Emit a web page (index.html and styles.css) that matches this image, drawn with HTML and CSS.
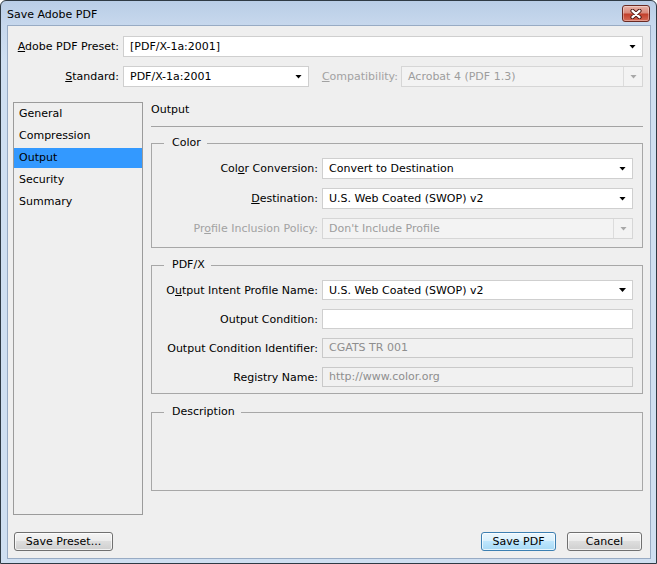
FILE: index.html
```html
<!DOCTYPE html>
<html lang="en">
<head>
<meta charset="utf-8">
<title>Save Adobe PDF</title>
<link rel="stylesheet" href="styles.css">
</head>
<body>
<div class="window">
  <div class="titlebar">
    <span class="title">Save Adobe PDF</span>
    <button class="close" aria-label="Close">
      <svg width="14" height="10" viewBox="0 0 14 10">
        <path d="M3.5 1.8 L10.5 8.2 M10.5 1.8 L3.5 8.2" stroke="#4b1712" stroke-width="4.2" stroke-linecap="round"/>
        <path d="M3.5 1.8 L10.5 8.2 M10.5 1.8 L3.5 8.2" stroke="#ffffff" stroke-width="2.3" stroke-linecap="round"/>
      </svg>
    </button>
  </div>
  <div class="client">
    <div class="row">
      <span class="lbl lbl-top"><u>A</u>dobe PDF Preset:</span>
      <div class="combo combo-fill"><span class="val">[PDF/X-1a:2001]</span><span class="arrow"></span></div>
    </div>
    <div class="row row-second">
      <span class="lbl lbl-top"><u>S</u>tandard:</span>
      <div class="combo combo-std"><span class="val">PDF/X-1a:2001</span><span class="arrow"></span></div>
      <span class="lbl lbl-compat disabled"><u>C</u>ompatibility:</span>
      <div class="combo combo-compat is-disabled"><span class="val">Acrobat 4 (PDF 1.3)</span><span class="arrow"></span></div>
    </div>
    <div class="main">
      <ul class="nav">
        <li>General</li>
        <li>Compression</li>
        <li class="selected">Output</li>
        <li>Security</li>
        <li>Summary</li>
      </ul>
      <div class="panel">
        <div class="panel-title">Output</div>
        <div class="sep"></div>
        <fieldset class="group group-color">
          <legend>Color</legend>
          <div class="form form-color">
            <span class="flbl">Col<u>o</u>r Conversion:</span>
            <div class="combo"><span class="val">Convert to Destination</span><span class="arrow"></span></div>
            <span class="flbl"><u>D</u>estination:</span>
            <div class="combo"><span class="val">U.S. Web Coated (SWOP) v2</span><span class="arrow"></span></div>
            <span class="flbl disabled">Pr<u>o</u>file Inclusion Policy:</span>
            <div class="combo is-disabled"><span class="val">Don't Include Profile</span><span class="arrow"></span></div>
          </div>
        </fieldset>
        <fieldset class="group group-pdfx">
          <legend>PDF/X</legend>
          <div class="form form-pdfx">
            <span class="flbl">O<u>u</u>tput Intent Profile Name:</span>
            <div class="combo"><span class="val">U.S. Web Coated (SWOP) v2</span><span class="arrow"></span></div>
            <span class="flbl">Output Condition:</span>
            <div class="field"></div>
            <span class="flbl">Output Condition Identifier:</span>
            <div class="field is-readonly">CGATS TR 001</div>
            <span class="flbl">Registry Name:</span>
            <div class="field is-readonly">http://www.color.org</div>
          </div>
        </fieldset>
        <fieldset class="group group-desc">
          <legend>Description</legend>
          <div class="desc-body"></div>
        </fieldset>
      </div>
    </div>
    <div class="buttons">
      <button class="btn btn-preset">Save Preset...</button>
      <span class="spacer"></span>
      <button class="btn btn-default">Save PDF</button>
      <button class="btn btn-cancel">Cancel</button>
    </div>
  </div>
</div>
</body>
</html>
```
FILE: styles.css
```css
* { box-sizing: border-box; }

html, body {
  margin: 0;
  padding: 0;
  width: 657px;
  height: 564px;
  overflow: hidden;
  background: #ffffff;
}

body {
  font-family: "DejaVu Sans", "Liberation Sans", sans-serif;
  font-size: 11px;
  color: #000;
}

u { text-decoration: underline; text-underline-offset: 1px; }

.window {
  width: 657px;
  height: 564px;
  border: 1px solid #2f3a44;
  border-radius: 6px 6px 0 0;
  background: linear-gradient(180deg, #b9cde6 0px, #c7d8ed 24px, #cfdff1 60px, #cfdff1 100%);
  display: flex;
  flex-direction: column;
}

.titlebar {
  height: 25px;
  display: flex;
  align-items: flex-start;
  padding: 4px 6px 0 6px;
  flex: none;
}

.title {
  font-size: 11px;
  line-height: 14px;
  margin-top: 3px;
  color: #000;
}

.close {
  margin-left: auto;
  width: 28px;
  height: 17px;
  padding: 0;
  border: 1px solid #6a2a23;
  border-radius: 3px;
  background: linear-gradient(180deg, #e8b2a8 0%, #d98a7c 45%, #c2402c 55%, #d66a56 100%);
  display: flex;
  align-items: center;
  justify-content: center;
  box-shadow: inset 0 0 0 1px rgba(255,255,255,0.35);
}
.close svg { display: block; }

.client {
  flex: 1;
  margin: 0 6px 5px 7px;
  background: #efefef;
  box-shadow: 0 0 0 1px #98abc4;
  padding: 10px 7px 7px 5px;
  display: flex;
  flex-direction: column;
}

.row {
  display: flex;
  align-items: center;
  height: 21px;
}
.row-second { margin-top: 9px; }

.lbl { line-height: 21px; white-space: nowrap; }
.lbl-top { width: 106px; text-align: right; margin-right: 4px; flex: none; }
.lbl-compat { margin-left: auto; margin-right: 3px; }

.disabled { color: #a2a2a2; }

.combo {
  height: 21px;
  background: #fff;
  border: 1px solid #cfcfcf;
  display: flex;
  align-items: center;
  padding: 0 5px 0 6px;
  white-space: nowrap;
}
.combo-fill { flex: 1; }
.combo-std { width: 186px; flex: none; }
.combo-compat { width: 242px; flex: none; }
.combo .val { flex: 1; }
.combo .arrow {
  width: 7px;
  height: 4px;
  background: #000;
  clip-path: polygon(0 0, 100% 0, 50% 100%);
  margin-right: 1px;
}
.combo.is-disabled {
  background: #f3f3f3;
  border-color: #d6d6d6;
  color: #9d9d9d;
  padding-right: 0;
}
.combo.is-disabled .arrow {
  background: #a8a8a8;
  margin: 0 5px 0 0;
}
.combo.is-disabled .val {
  border-right: 1px solid #dcdcdc;
  height: 19px;
  line-height: 19px;
  margin-right: 6px;
}

.main {
  display: flex;
  margin-top: 15px;
  height: 413px;
}

.nav {
  list-style: none;
  margin: 0;
  padding: 1px 0 0 0;
  width: 130px;
  height: 413px;
  border: 1px solid #9b9b9b;
  flex: none;
  display: flex;
  flex-direction: column;
  gap: 2px;
}
.nav li {
  height: 20px;
  line-height: 20px;
  padding-left: 5px;
}
.nav li.selected { background: #3399ff; }

.panel {
  margin-left: 8px;
  flex: 1;
  display: flex;
  flex-direction: column;
}

.panel-title { line-height: 14px; height: 14px; margin-top: 1px; }
.sep {
  margin-top: 9px;
  height: 1px;
  background: #a3a3a3;
}

.group {
  margin: 0;
  padding: 0;
  border: 1px solid #a7a7a7;
  min-width: 0;
}
.group legend {
  margin-left: 12px;
  padding: 0 6px 0 8px;
  line-height: 14px;
  font-size: 11px;
}
.group-color { margin-top: 9px; }
.group-pdfx { margin-top: 10px; }
.group-desc { margin-top: 11px; }

.form {
  display: grid;
  grid-template-columns: 1fr 311px;
  column-gap: 4px;
  padding: 8px 9px 8px 10px;
  align-items: center;
}
.form-color { row-gap: 9px; grid-auto-rows: 21px; }
.form-pdfx { row-gap: 9px; grid-auto-rows: 20px; padding-bottom: 6px; }
.form-pdfx .combo { height: 20px; }

.flbl { text-align: right; white-space: nowrap; }

.field {
  height: 20px;
  background: #fff;
  border: 1px solid #cfcfcf;
  padding: 0 6px;
  line-height: 18px;
}
.field.is-readonly {
  background: #f1f1f1;
  border-color: #c9c9c9;
  color: #8e8e8e;
}

.desc-body { height: 71px; }

.buttons {
  margin-top: 17px;
  display: flex;
  align-items: center;
  height: 19px;
  padding: 0 1px;
}
.spacer { flex: 1; }

.btn {
  font-family: inherit;
  font-size: 11px;
  color: #000;
  height: 19px;
  padding: 0;
  border: 1px solid #707070;
  border-radius: 3px;
  background: linear-gradient(180deg, #f4f4f4 0%, #ebebeb 49%, #dddddd 50%, #cfcfcf 100%);
  box-shadow: inset 0 0 0 1px rgba(255,255,255,0.7);
  line-height: 17px;
}
.btn-preset { width: 99px; }
.btn-default {
  width: 75px;
  border-color: #3c7fb1;
  background: linear-gradient(180deg, #eaf6fd 0%, #d9f0fc 49%, #bee6fd 50%, #a7d9f5 100%);
}
.btn-cancel { width: 75px; margin-left: 11px; }
```
